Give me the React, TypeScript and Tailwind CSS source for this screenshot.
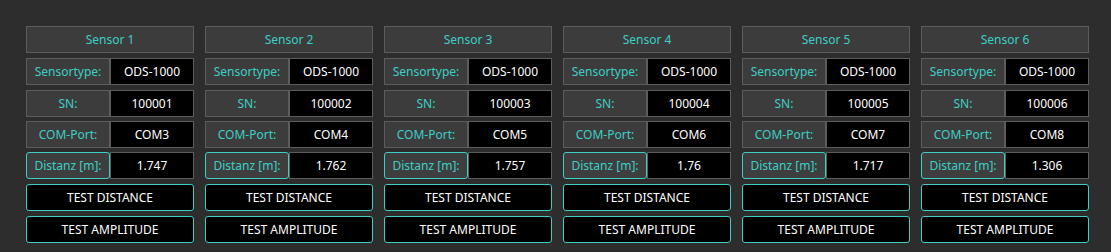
import React from 'react';

interface Sensor {
    id: number;
    type: string;
    sn: string;
    port: string;
    dist: string;
}

const sensors: Sensor[] = [
    { id: 1, type: "ODS-1000", sn: "100001", port: "COM3", dist: "1.747" },
    { id: 2, type: "ODS-1000", sn: "100002", port: "COM4", dist: "1.762" },
    { id: 3, type: "ODS-1000", sn: "100003", port: "COM5", dist: "1.757" },
    { id: 4, type: "ODS-1000", sn: "100004", port: "COM6", dist: "1.76" },
    { id: 5, type: "ODS-1000", sn: "100005", port: "COM7", dist: "1.717" },
    { id: 6, type: "ODS-1000", sn: "100006", port: "COM8", dist: "1.306" },
];

const Label: React.FC<{ children: React.ReactNode; active?: boolean }> = ({ children, active }) => (
    <div
        className={
            active
                ? "w-[84px] h-full flex items-center justify-center bg-[#3e3e3e] border border-[#3ccfc6] rounded-[3px] text-[#3ccfc6]"
                : "w-[84px] h-full flex items-center justify-center bg-[#3c3c3c] border border-[#5c5c5c] text-[#3ccfc6]"
        }
    >
        {children}
    </div>
);

const Value: React.FC<{ children: React.ReactNode }> = ({ children }) => (
    <div className="w-[84px] h-full flex items-center justify-center bg-black border border-[#5c5c5c] text-white">
        {children}
    </div>
);

const SensorColumn: React.FC<{ s: Sensor }> = ({ s }) => (
    <div className="w-[168px] flex flex-col">
        <div className="h-[27px] flex items-center justify-center bg-[#3c3c3c] border border-[#5c5c5c] text-[#3ccfc6]">
            Sensor {s.id}
        </div>
        <div className="h-[27px] mt-[5px] flex">
            <Label>Sensortype:</Label>
            <Value>{s.type}</Value>
        </div>
        <div className="h-[27px] mt-[5px] flex">
            <Label>SN:</Label>
            <Value>{s.sn}</Value>
        </div>
        <div className="h-[27px] mt-[4px] flex">
            <Label>COM-Port:</Label>
            <Value>{s.port}</Value>
        </div>
        <div className="h-[27px] mt-[4px] flex">
            <Label active>Distanz [m]:</Label>
            <Value>{s.dist}</Value>
        </div>
        <button className="h-[27px] mt-[5px] flex items-center justify-center bg-black border border-[#3ccfc6] rounded-[3px] text-white">
            TEST DISTANCE
        </button>
        <button className="h-[27px] mt-[5px] flex items-center justify-center bg-black border border-[#3ccfc6] rounded-[3px] text-white">
            TEST AMPLITUDE
        </button>
    </div>
);

export default function App() {
    return (
        <div className="w-[1111px] h-[252px] bg-[#2d2d2d] pt-[26px] pl-[26px] flex gap-[11px] text-[12px] font-['Noto_Sans',sans-serif]">
            {sensors.map(s => (
                <SensorColumn key={s.id} s={s} />
            ))}
        </div>
    );
}
